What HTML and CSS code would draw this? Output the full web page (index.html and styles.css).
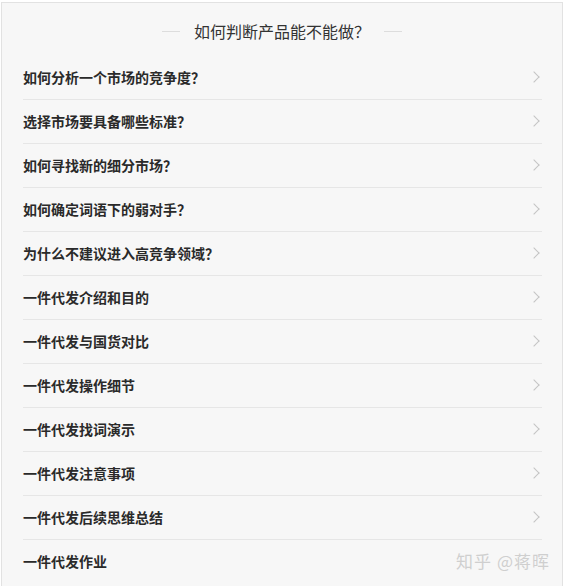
FILE: index.html
```html
<!DOCTYPE html>
<html lang="zh">
<head>
  <meta charset="UTF-8">
  <title>如何判断产品能不能做？</title>
  <meta name="viewport" content="width=device-width, initial-scale=1.0">
  <link rel="stylesheet" href="styles.css">
</head>
<body>
  <div class="page">
    <h1 class="title"><span>如何判断产品能不能做？</span></h1>

    <ul class="list">
      <li class="row">如何分析一个市场的竞争度？</li>
      <li class="row">选择市场要具备哪些标准？</li>
      <li class="row">如何寻找新的细分市场？</li>
      <li class="row">如何确定词语下的弱对手？</li>
      <li class="row">为什么不建议进入高竞争领域？</li>
      <li class="row">一件代发介绍和目的</li>
      <li class="row">一件代发与国货对比</li>
      <li class="row">一件代发操作细节</li>
      <li class="row">一件代发找词演示</li>
      <li class="row">一件代发注意事项</li>
      <li class="row">一件代发后续思维总结</li>
      <li class="row last">一件代发作业</li>
    </ul>

    <div class="watermark">知乎 @蒋晖</div>
  </div>
</body>
</html>
```

FILE: styles.css
```css
body {
  margin: 0;
  background: #fff;
  font-family: "Noto Sans CJK SC", "Liberation Sans", sans-serif;
}

.page {
  position: relative;
  box-sizing: border-box;
  height: 584px;
  margin: 2px 3px 0 1px;
  border: 1px solid #e2e2e2;
  border-bottom: none;
  background: #f7f7f7;
}

.title {
  display: flex;
  align-items: center;
  justify-content: center;
  gap: 14px;
  height: 53px;
  margin: 0;
  padding-top: 4px;
  padding-bottom: 1px;
  box-sizing: border-box;
  font-size: 16px;
  font-weight: normal;
  color: #333;
}

.title::before,
.title::after {
  content: "";
  width: 18px;
  height: 1px;
  background: #ddd;
}

.list {
  list-style: none;
  margin: 0;
  padding: 0 20px 0 21px;
}

.row {
  display: flex;
  align-items: center;
  justify-content: space-between;
  height: 42px;
  padding-bottom: 1px;
  border-bottom: 1px solid #e6e6e6;
  font-size: 14px;
  font-weight: bold;
  color: #2a2a2a;
}

.row::after {
  content: "";
  width: 7px;
  height: 7px;
  margin-right: 4px;
  border-top: 1.5px solid #c4c4c4;
  border-right: 1.5px solid #c4c4c4;
  transform: rotate(45deg);
}

.row.last {
  border-bottom: none;
}

.row.last::after {
  display: none;
}

.watermark {
  position: absolute;
  right: 12px;
  bottom: 13px;
  font-size: 17px;
  letter-spacing: 1px;
  color: #cfcfcf;
}
```
